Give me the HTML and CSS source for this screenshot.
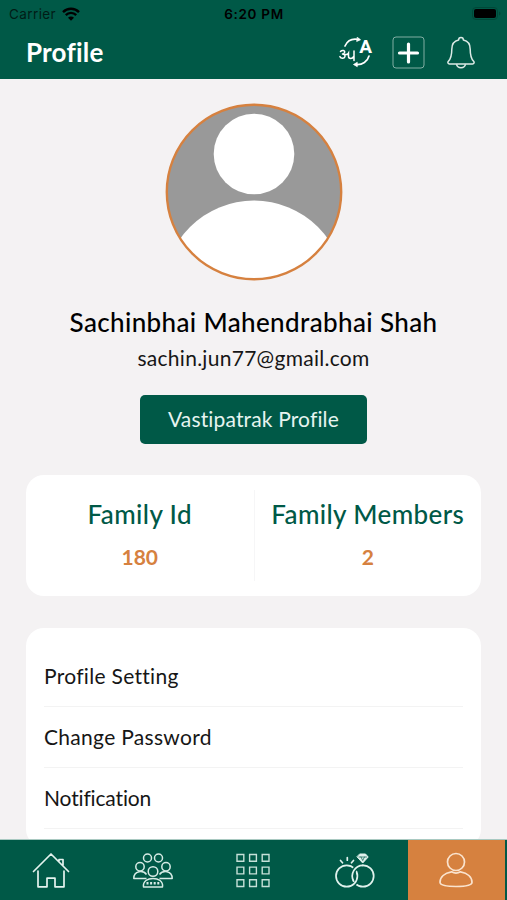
FILE: index.html
```html
<!DOCTYPE html>
<html lang="en">
    <head>
        <meta charset="utf-8">
        <title>Profile</title>
        <meta name="viewport" content="width=device-width, initial-scale=1.0">
        <link rel="stylesheet" href="styles.css">
    </head>
    <body>
        <div class="app">
            <div class="status">
                <div class="carrier">
                    <span>Carrier</span>
                    <svg width="18" height="14" viewBox="0 0 18 14" fill="none" stroke="#000" stroke-width="2.4">
                        <path d="M1 5.1a11.3 11.3 0 0 1 16 0M3.8 8.1a7.3 7.3 0 0 1 10.4 0"/>
                        <path d="M9 13.8l-3-3a4.2 4.2 0 0 1 6 0z" fill="#000" stroke="none"/>
                    </svg>
                </div>
                <span class="time">6:20 PM</span>
                <div class="battery">
                    <svg width="29" height="13" viewBox="0 0 29 13">
                        <rect x=".5" y=".5" width="25" height="12" rx="3.5" fill="none" stroke="#004838"/>
                        <rect x="2" y="2" width="22" height="9" rx="2"/>
                        <path d="M27 4.5c2 .8 2 3.2 0 4z" fill="#004838"/>
                    </svg>
                </div>
            </div>
            <div class="header">
                <h1>Profile</h1>
                <div class="actions">
                    <svg width="36" height="32" viewBox="0 0 36 32" fill="none" stroke="#fff" stroke-width="1.7" stroke-linecap="round">
                        <path d="M7 10C9.500 4.500 14.500 2.300 20.500 3.500M31 20C29.500 25.500 24.500 29 18 28.500"/>
                        <path d="M19.500 1.500l3 2.200-3.500 1.600zM19 26.500l-3.500 2 3.500 2z" fill="#fff" stroke-width=".8"/>
                        <text class="latin" x="21.200" y="16.800">A</text>
                        <path d="M2.500 15.500c1.500-1.800 5-1.300 4 1.200-.5 1.200-1.500 1.400-2.600 1.400 2.200-.2 3.600 1 3 2.700-.8 2.200-4 1.900-5-.2M7.300 18.500c1.500.3 2.500-.2 3.200-1.400v3.500c0 2.400 4 2.600 5.200-.2M16 15v9.500" stroke-width="1.500"/>
                    </svg>
                    <svg width="33" height="33" viewBox="0 0 33 33" fill="none" stroke="#fff">
                        <rect x="1" y="1" width="31" height="31" rx="3" stroke="#80aea3"/>
                        <path d="M16.500 8v18M7.500 17h18" stroke-width="3.200" stroke-linecap="round"/>
                    </svg>
                    <svg width="28" height="33" viewBox="0 0 28 33" fill="none" stroke="#dceae6" stroke-width="1.500" stroke-linejoin="round">
                        <path d="M11.600 4C11.600.5 16.400.5 16.400 4 21 5 23.200 9 23.200 13.200c0 6.500.8 9.300 3.400 12.100 1 1.100.4 2.700-1 2.700H2.400c-1.400 0-2-1.600-1-2.700 2.600-2.800 3.400-5.600 3.400-12.100C4.800 9 7 5 11.600 4z"/>
                        <path d="M9.500 28.200c.8 4.700 8.200 4.700 9 0"/>
                    </svg>
                </div>
            </div>
            <div class="content">
                <svg class="avatar" width="178" height="178" viewBox="0 0 178 178">
                    <defs>
                        <clipPath id="round"><circle cx="89" cy="89" r="87"/></clipPath>
                    </defs>
                    <g clip-path="url(#round)">
                        <rect width="178" height="178" fill="#999"/>
                        <circle cx="89" cy="51" r="40.300" fill="#fff"/>
                        <circle cx="89" cy="188" r="90.500" fill="#fff"/>
                    </g>
                    <circle cx="89" cy="89" r="87.200" fill="none" stroke="#d6813f" stroke-width="2.400"/>
                </svg>
                <h2 class="name">Sachinbhai Mahendrabhai Shah</h2>
                <p class="email">sachin.jun77@gmail.com</p>
                <button class="btn" type="button">Vastipatrak Profile</button>
                <div class="card family">
                    <div class="family-item">
                        <h3>Family Id</h3>
                        <p>180</p>
                    </div>
                    <div class="family-item">
                        <h3>Family Members</h3>
                        <p>2</p>
                    </div>
                </div>
                <ul class="card menu">
                    <li>Profile Setting</li>
                    <li>Change Password</li>
                    <li>Notification</li>
                </ul>
            </div>
            <div class="nav">
                <div class="tab">
                    <svg width="38" height="38" viewBox="0 0 38 38" fill="none" stroke="#e4f3ef" stroke-width="1.700" stroke-linecap="round" stroke-linejoin="round">
                        <path d="M1.500 20.500L19 3l17.500 17.500M6 20v15.800h9v-8.600h8v8.600h9V20M27 10V8.500h4V14"/>
                    </svg>
                </div>
                <div class="tab">
                    <svg width="40" height="38" viewBox="0 0 40 38" fill="none" stroke="#d5ebe5" stroke-width="1.500" stroke-linejoin="round">
                        <circle cx="14.500" cy="7" r="4"/>
                        <circle cx="25.500" cy="7" r="4"/>
                        <circle cx="7" cy="15.800" r="4.200"/>
                        <circle cx="33" cy="15.800" r="4.200"/>
                        <circle cx="20" cy="20.500" r="4.800"/>
                        <path d="M13.500 27.500H.8c0-8 9.500-8.500 12.700-4M26.500 27.500h12.700c0-8-9.500-8.500-12.700-4M10.500 36c-1.800-11.500 20.800-11.500 19 0z"/>
                        <path d="M13.500 32.300h13" stroke-width="2.500" stroke-dasharray="2 1.600"/>
                    </svg>
                </div>
                <div class="tab shift">
                    <svg width="36" height="36" viewBox="0 0 36 36" fill="none" stroke="#c5e0d8" stroke-width="1.400">
                        <path d="M2 2.500h6.800v6.800H2zM14.600 2.500h6.800v6.800h-6.800zM27.200 2.500H34v6.800h-6.800zM2 15.100h6.800v6.800H2zM14.600 15.100h6.800v6.800h-6.800zM27.200 15.100H34v6.800h-6.800zM2 27.700h6.800v6.800H2zM14.600 27.700h6.800v6.800h-6.800zM27.200 27.700H34v6.800h-6.800z"/>
                    </svg>
                </div>
                <div class="tab shift">
                    <svg width="40" height="38" viewBox="0 0 40 38" fill="none" stroke="#e0f2ed" stroke-width="1.700" stroke-linecap="round">
                        <circle cx="28" cy="25" r="10.700"/>
                        <circle cx="11.700" cy="25" r="10.700" stroke="#005947" stroke-width="4.500"/>
                        <circle cx="11.700" cy="25" r="10.700"/>
                        <path d="M17.500 27A10.700 10.700 0 0 1 25.200 14.700" stroke="#005947" stroke-width="4.500"/>
                        <path d="M18.700 30.300A10.700 10.700 0 0 1 28 14.300"/>
                        <path d="M5.500 9.500l2 2.300M12.300 6.500v2.700M18.500 9.500l-2 2.300"/>
                        <path d="M25 3h5.500l2.700 3-5.500 6-5.500-6z" fill="#e0f2ed" stroke-width="1" stroke-linejoin="round"/>
                        <path d="M24 6h7.500M26 6l1.700 3.500L29.500 6" stroke="#005947" stroke-width=".7"/>
                    </svg>
                </div>
                <div class="tab active">
                    <svg width="36" height="38" viewBox="0 0 36 38" fill="none" stroke="#fae3ce" stroke-width="1.700">
                        <circle cx="18" cy="11" r="8.500"/>
                        <path d="M13.500 20.800c3 1.700 6 1.700 9 0C29.500 22 34 26 34 31.300c0 3-7 4.200-16 4.200S2 34.300 2 31.300c0-5.300 4.500-9.300 11.500-10.500z"/>
                    </svg>
                </div>
            </div>
        </div>
    </body>
</html>
```
FILE: styles.css
```css
*{
    margin: 0;
    padding: 0;
    box-sizing: border-box;
}
body{
    font-family: Lato, "Open Sans", sans-serif;
    color: #161616;
    background-color: #f4f2f3;
}
svg{
    display: block;
}
.app{
    display: flex;
    flex-direction: column;
    height: 900px;
    overflow: hidden;
}
.status{
    display: grid;
    grid-template-columns: 1fr auto 1fr;
    align-items: center;
    height: 27px;
    padding: 0 6px 0 9px;
    font-family: Inter, sans-serif;
    font-size: 13.5px;
    letter-spacing: .4px;
    color: #001c16;
    background-color: #005947;
}
.carrier{
    display: flex;
    align-items: center;
    gap: 6px;
}
.time{
    margin-right: 2px;
    font-weight: 600;
    letter-spacing: .7px;
    color: #000;
}
.battery{
    justify-self: end;
}
.header{
    display: flex;
    justify-content: space-between;
    align-items: center;
    height: 52px;
    padding: 0 32px 2px 26px;
    color: #fff;
    background-color: #005947;
}
.header h1{
    font-size: 26px;
    line-height: 50px;
    letter-spacing: .2px;
}
.actions{
    display: flex;
    align-items: center;
    gap: 22px;
}
.actions svg:first-child{
    margin-right: -4px;
}
.latin{
    font: bold 19px Roboto, sans-serif;
    fill: #fff;
    stroke: none;
}
.content{
    flex: 1;
    min-height: 0;
    padding: 24px 26px 0;
    overflow: hidden;
    text-align: center;
}
.avatar{
    margin: 0 auto;
}
.name{
    margin-top: 25px;
    font-size: 26px;
    font-weight: 500;
    line-height: 32px;
    letter-spacing: .37px;
    color: #000;
    white-space: nowrap;
}
.email{
    margin-top: 7px;
    font-size: 21px;
    line-height: 26px;
    letter-spacing: .28px;
}
.btn{
    display: block;
    width: 227px;
    height: 49px;
    margin: 24px auto 0;
    padding-bottom: 3px;
    border: 0;
    border-radius: 5px;
    font-family: inherit;
    font-size: 21px;
    letter-spacing: .15px;
    color: #e6f4f0;
    background-color: #005947;
}
.card{
    border-radius: 18px;
    background-color: #fff;
}
.family{
    display: grid;
    grid-template-columns: 1fr 1fr;
    height: 121px;
    margin-top: 31px;
    padding: 15px 0;
}
.family-item + .family-item{
    border-left: 1px solid #f6f6f7;
}
.family-item h3{
    padding-top: 8px;
    font-size: 26px;
    font-weight: 500;
    line-height: 32px;
    letter-spacing: .38px;
    color: #005947;
    white-space: nowrap;
}
.family-item p{
    margin-top: 14px;
    font-size: 21px;
    font-weight: bold;
    line-height: 26px;
    color: #d6813f;
}
.menu{
    margin-top: 32px;
    padding: 18px 18px;
    list-style: none;
    text-align: left;
}
.menu li{
    height: 61px;
    border-bottom: 1px solid #f3f3f3;
    font-size: 21px;
    line-height: 60px;
    letter-spacing: .3px;
}
.menu li:last-child{
    letter-spacing: -.15px;
}
.nav{
    display: flex;
    height: 61px;
    border-top: 1px solid #a9c9c1;
    background-color: #005947;
}
.tab{
    display: flex;
    justify-content: center;
    align-items: center;
    width: 102px;
}
.tab.shift{
    padding-right: 4px;
}
.tab.active{
    width: 97px;
    padding-right: 2px;
    background-color: #d6813f;
}
```
